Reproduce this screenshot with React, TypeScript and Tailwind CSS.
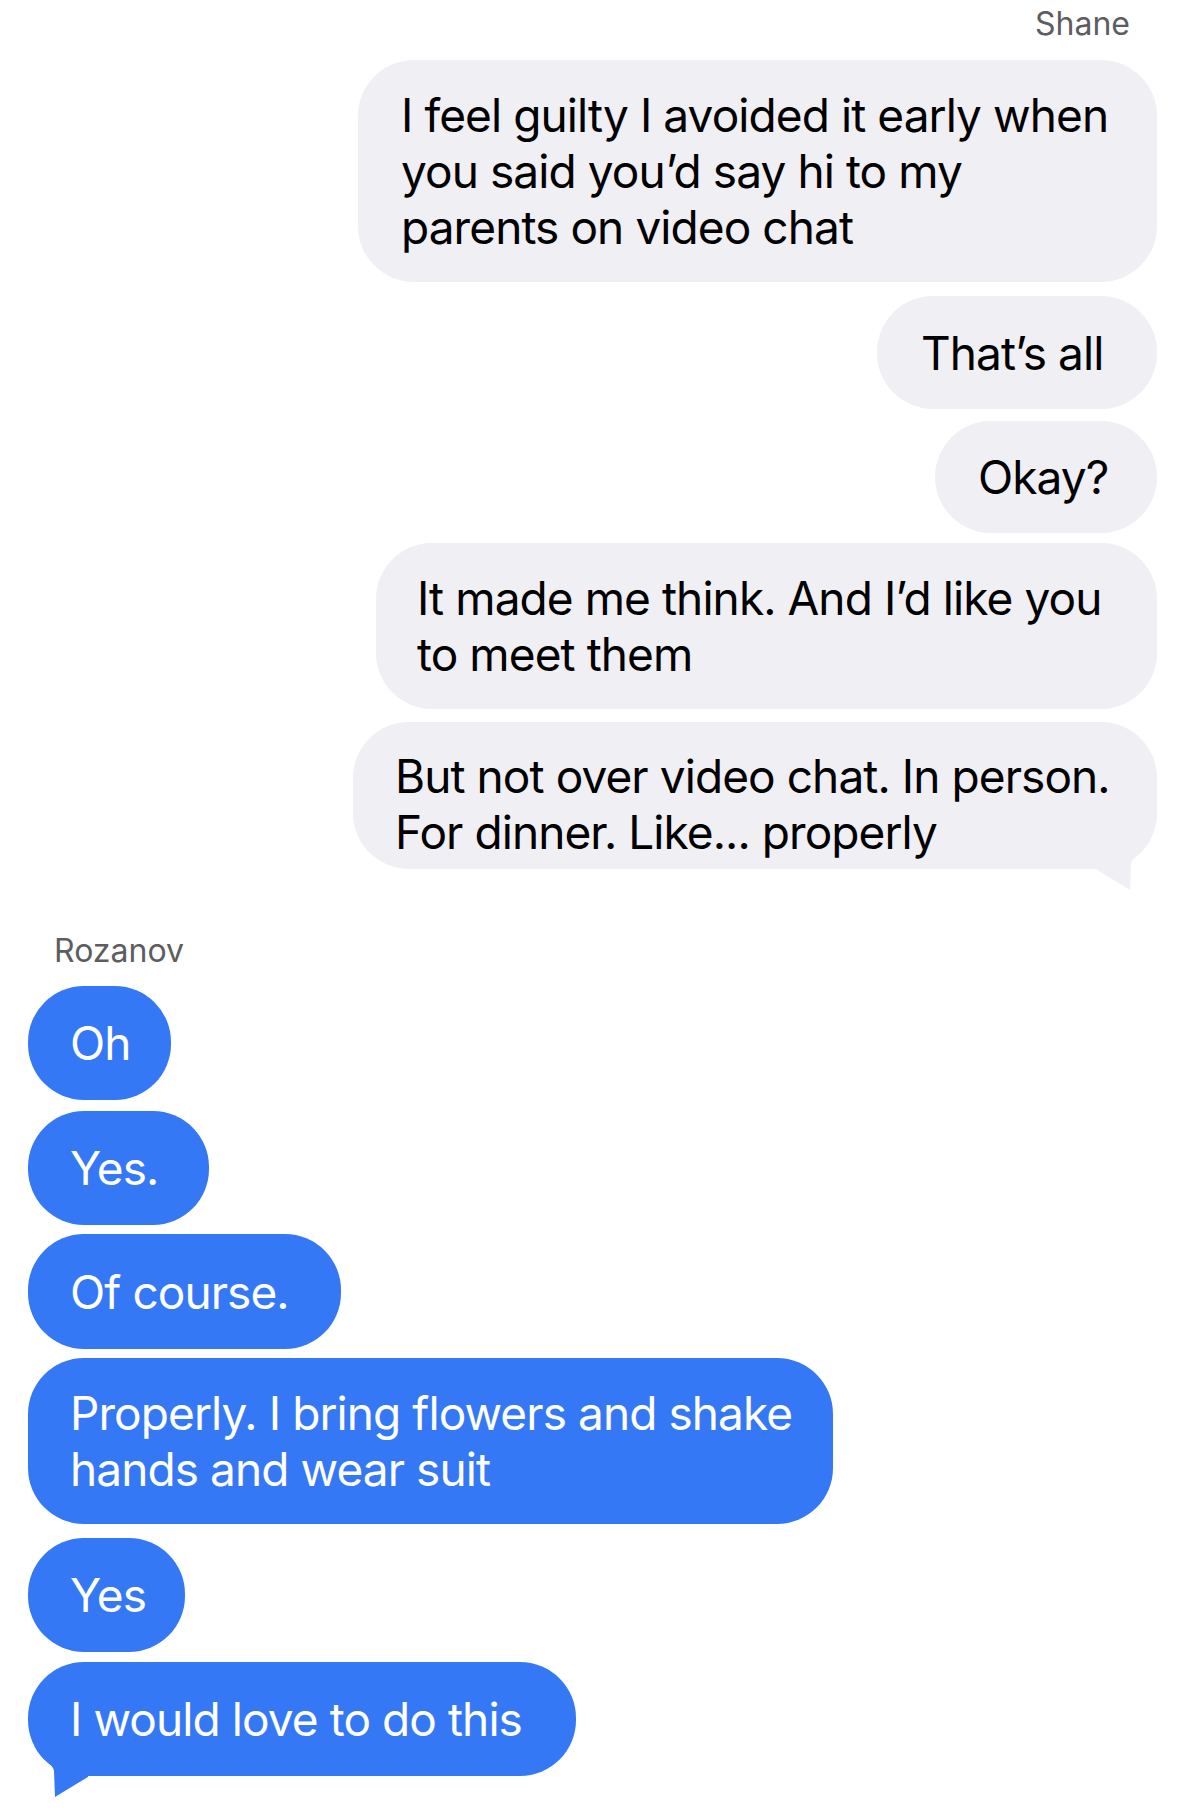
type Msg = {
  lines: string[];
  box: string;
  tail?: boolean;
};

// gray bubbles, right aligned
const outgoing: Msg[] = [
  {
    lines: ["I feel guilty I avoided it early when", "you said you’d say hi to my", "parents on video chat"],
    box: "mt-[17px] w-[799px] h-[222px] pl-[43px] justify-center",
  },
  { lines: ["That’s all"], box: "mt-[14px] w-[280px] h-[113px] pl-[44px] justify-center" },
  { lines: ["Okay?"], box: "mt-[12px] w-[222px] h-[112px] pl-[43px] justify-center" },
  {
    lines: ["It made me think. And I’d like you", "to meet them"],
    box: "mt-[10px] w-[781px] h-[166px] pl-[41px] justify-center",
  },
  {
    lines: ["But not over video chat. In person.", "For dinner. Like... properly"],
    box: "mt-[13px] w-[804px] h-[147px] pl-[42px] pt-[26px] justify-start",
    tail: true,
  },
];

// blue bubbles, left aligned
const incoming: Msg[] = [
  { lines: ["Oh"], box: "mt-[16px] w-[143px] h-[114px]" },
  { lines: ["Yes."], box: "mt-[11px] w-[181px] h-[114px]" },
  { lines: ["Of course."], box: "mt-[9px] w-[313px] h-[115px]" },
  { lines: ["Properly. I bring flowers and shake", "hands and wear suit"], box: "mt-[9px] w-[805px] h-[166px]" },
  { lines: ["Yes"], box: "mt-[14px] w-[157px] h-[114px]" },
  { lines: ["I would love to do this"], box: "mt-[10px] w-[548px] h-[114px]", tail: true },
];

function Tail({ color, flip }: { color: string; flip?: boolean }) {
  return (
    <svg
      width="70"
      height="52"
      viewBox="0 0 70 52"
      className={flip ? "absolute right-0 bottom-[-22px] -scale-x-100" : "absolute left-0 bottom-[-22px]"}
    >
      <path
        d="M6.4 0 A56 56 0 0 0 20.1 17 Q25 20 26 25 L27 51 Q40 43 60 31 L62 0 Z"
        fill={color}
      />
    </svg>
  );
}

export default function App() {
  return (
    <div className="min-h-[1812px] w-[1187px] bg-white font-['Inter','Noto_Sans',sans-serif]">
      <div className="flex flex-col items-end pr-[30px]">
        <div className="pt-[5px] mr-[27px] text-[32px] leading-[38px] text-[#5d5d5f]">Shane</div>
        {outgoing.map((m, i) => (
          <div
            key={i}
            className={`relative flex flex-col rounded-[56px] bg-[#efeff4] text-[46px] leading-[56px] tracking-[-0.02em] text-black whitespace-nowrap ${m.box}`}
          >
            {m.lines.map((l, j) => (
              <span key={j}>{l}</span>
            ))}
            {m.tail && <Tail color="#efeff4" flip />}
          </div>
        ))}
      </div>

      <div className="flex flex-col items-start pl-[28px] pt-[63px]">
        <div className="ml-[26px] text-[32px] leading-[38px] text-[#5d5d5f]">Rozanov</div>
        {incoming.map((m, i) => (
          <div
            key={i}
            className={`relative flex flex-col justify-center rounded-[56px] bg-[#3478f6] pl-[42px] text-[46px] leading-[56px] tracking-[-0.02em] text-white whitespace-nowrap ${m.box}`}
          >
            {m.lines.map((l, j) => (
              <span key={j}>{l}</span>
            ))}
            {m.tail && <Tail color="#3478f6" />}
          </div>
        ))}
      </div>
    </div>
  );
}
